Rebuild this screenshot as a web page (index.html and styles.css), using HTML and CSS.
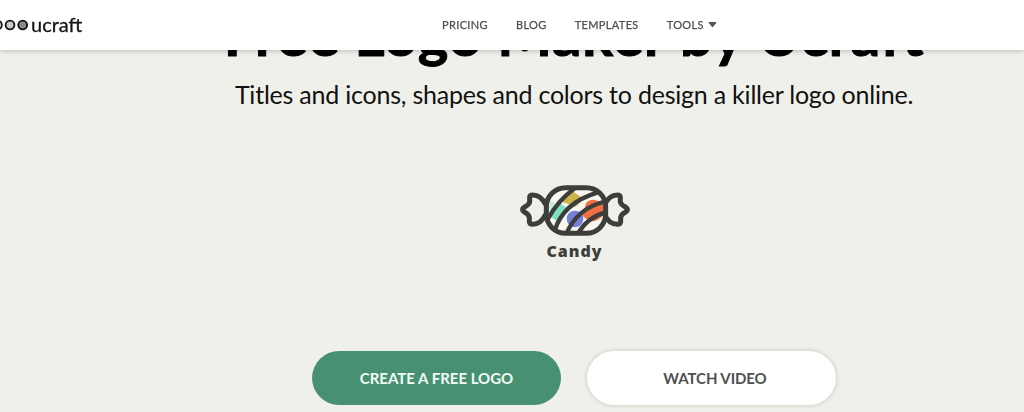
FILE: index.html
```html
<!DOCTYPE html>
<html lang="en">
<head>
  <meta charset="utf-8">
  <title>Free Logo Maker by Ucraft</title>
  <link rel="stylesheet" href="styles.css">
</head>

<body>
  <header class="navbar">
    <a href="#" class="brand">
      <svg class="brand-dots" width="30" height="12" viewBox="0 0 30 12">
        <circle cx="-2.6" cy="6" r="4.4" fill="#fff" stroke="#151515" stroke-width="1.9"/>
        <circle cx="10" cy="6" r="4.4" fill="#c9c9c9" stroke="#151515" stroke-width="1.9"/>
        <circle cx="22.7" cy="6" r="4.4" fill="#8c8c8c" stroke="#151515" stroke-width="1.9"/>
      </svg>
      <span class="brand-name">ucraft</span>
    </a>
    <nav class="menu">
      <a href="#">PRICING</a>
      <a href="#">BLOG</a>
      <a href="#">TEMPLATES</a>
      <a href="#" class="has-sub">TOOLS
        <svg class="caret" width="9" height="6" viewBox="0 0 9 6"><path d="M1 .5h7L4.500 5z" fill="#555" stroke="#555" stroke-linejoin="round"/></svg>
      </a>
    </nav>
  </header>

  <main class="hero">
    <h1>Free Logo Maker by Ucraft</h1>
    <p class="lead">Titles and icons, shapes and colors to design a killer logo online.</p>

    <div class="preview">
      <svg class="candy" width="110" height="51" viewBox="30 29 330 153">
        <defs>
          <clipPath id="wrap"><rect x="109" y="37" width="178" height="137" rx="58"/></clipPath>
        </defs>
        <g clip-path="url(#wrap)">
          <rect x="109" y="37" width="178" height="137" fill="#f7f6f0"/>
          <path d="M110 92l14-16 14 10-18 28z" fill="#c5ecdd"/>
          <path d="M122 124l24-42 22 14-27 42z" fill="#7fe0c0"/>
          <path d="M158 80Q172 58 188 48L214 66Q210 88 196 94z" fill="#cdb549"/>
          <circle cx="195" cy="131" r="25" fill="#7380dc"/>
          <path d="M228 84Q240 68 262 76L282 90V116Q262 144 236 136L218 122z" fill="#ee7043"/>
        </g>
        <g clip-path="url(#wrap)" fill="none" stroke="#3d3d3b" stroke-width="13">
          <path d="M112 134Q142 76 198 36"/>
          <path d="M134 166Q160 82 262 52"/>
          <path d="M168 178Q200 98 288 78"/>
          <path d="M202 178Q232 124 292 110"/>
        </g>
        <g fill="none" stroke="#3d3d3b" stroke-width="15" stroke-linejoin="round">
          <rect x="109" y="37" width="178" height="137" rx="58"/>
          <path d="M107 88Q93 59 68 59Q58 59 59 67V80Q56 89 44 95Q31 103 44 111Q56 117 58 126V139Q59 147 68 147Q94 146 107 117"/>
          <path d="M284 88Q297 59 322 59Q332 59 331 67V80Q334 89 346 95Q359 103 346 111Q334 117 332 126V139Q331 147 322 147Q296 146 284 117"/>
        </g>
      </svg>
      <span class="candy-name">Candy</span>
    </div>

    <div class="actions">
      <a href="#" class="btn btn-green">CREATE A FREE LOGO</a>
      <a href="#" class="btn btn-white">WATCH VIDEO</a>
    </div>
  </main>
</body>
</html>
```
FILE: styles.css
```css
body {
  margin: 0;
  height: 412px;
  overflow: hidden;
  font-family: Lato, sans-serif;
  background-color: #eff0ea;
  color: #111;
}

a {
  text-decoration: none;
}

.navbar {
  position: fixed;
  top: 0;
  left: 0;
  right: 0;
  height: 50px;
  display: grid;
  grid-template-columns: 442px 1fr;
  align-items: center;
  background: #fff;
  box-shadow: 0 1px 5px rgba(0, 0, 0, 0.22);
  z-index: 10;
}

.brand {
  display: flex;
  align-items: center;
  color: #151515;
}

.brand-name {
  font-size: 20px;
  line-height: 24px;
  padding: 0 0 3px 1px;
  -webkit-text-stroke: 0.3px #151515;
}

.menu {
  display: flex;
  gap: 28px;
}

.menu a {
  color: #505050;
  font-size: 11px;
  line-height: 16px;
  letter-spacing: 0.36px;
  -webkit-text-stroke: 0.25px #505050;
}

.menu .has-sub {
  display: flex;
  align-items: center;
  gap: 4px;
}

.hero {
  padding-left: 124px;
  display: flex;
  flex-direction: column;
  align-items: center;
}

h1 {
  margin: 0 0 4px;
  font-size: 58px;
  line-height: 68px;
  font-weight: 700;
  letter-spacing: 0.7px;
  white-space: nowrap;
  color: #000;
  -webkit-text-stroke: 1px #000;
}

.lead {
  margin: 4px 0 0;
  font-size: 25px;
  line-height: 36px;
  letter-spacing: -0.22px;
}

.preview {
  height: 166px;
  padding: 73px 0 0 1px;
  display: flex;
  flex-direction: column;
  align-items: center;
}

.candy-name {
  margin-top: 3px;
  font-family: "Noto Sans", "Open Sans", sans-serif;
  font-size: 16px;
  line-height: 24px;
  font-weight: 900;
  letter-spacing: 1px;
  color: #3d3d3b;
}

.actions {
  display: flex;
  gap: 26px;
}

.btn {
  width: 249px;
  height: 54px;
  border-radius: 27px;
  font-size: 15px;
  line-height: 54px;
  font-weight: 700;
  text-align: center;
}

.btn-green {
  background: #479172;
  color: #f4fbf6;
}

.btn-white {
  background: #fff;
  color: #505050;
  text-indent: 7px;
  letter-spacing: -0.1px;
  box-shadow: 0 0 5px rgba(0, 0, 0, 0.18);
}
```
